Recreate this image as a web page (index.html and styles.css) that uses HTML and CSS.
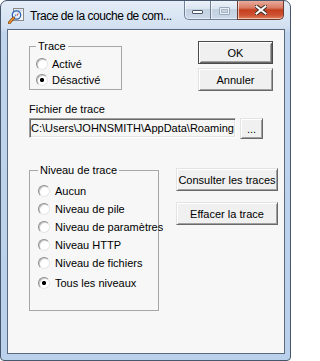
FILE: index.html
```html
<!DOCTYPE html>
<html lang="fr">
<head>
<meta charset="utf-8">
<title>Trace de la couche de communication</title>
<link rel="stylesheet" href="styles.css">
</head>
<body>
<div class="window">
  <div class="titlebar">
    <svg class="app-icon" width="16" height="16" viewBox="0 0 16 16">
      <rect x="5.5" y="0.5" width="10" height="12" fill="#f6f6f6" stroke="#8a8a8a"/>
      <rect x="6.5" y="1.5" width="8" height="2" fill="#c9d6e6"/>
      <circle cx="8.5" cy="7" r="4.2" fill="#e4eefa" stroke="#2f63b4" stroke-width="1.3"/>
      <path d="M8.5 7 L11 4.4 L9.4 7.8 Z" fill="#d42a1e"/>
      <path d="M8.5 7 L6 9.6 L7.6 6.2 Z" fill="#3b6fc0"/>
      <line x1="5.6" y1="10" x2="1.3" y2="14.8" stroke="#7a4a1a" stroke-width="3" stroke-linecap="round"/>
      <line x1="5.6" y1="10" x2="1.3" y2="14.8" stroke="#f0922e" stroke-width="1.6" stroke-linecap="round"/>
    </svg>
    <span class="title">Trace de la couche de com...</span>
    <div class="caption-buttons">
      <div class="cap cap-min"><span class="min-glyph"></span></div>
      <div class="cap cap-max"><span class="max-glyph"></span></div>
      <div class="cap cap-close">
        <svg width="12" height="10" viewBox="0 0 12 10">
          <path d="M1.5 1.5 L10.5 8.5 M10.5 1.5 L1.5 8.5" stroke="#3b2a26" stroke-width="4" stroke-linecap="square"/>
          <path d="M1.5 1.5 L10.5 8.5 M10.5 1.5 L1.5 8.5" stroke="#ffffff" stroke-width="2" stroke-linecap="square"/>
        </svg>
      </div>
    </div>
  </div>
  <div class="client">
    <div class="row row-top">
      <fieldset class="group group-trace">
        <legend>Trace</legend>
        <div class="opt"><span class="radio"></span>Activé</div>
        <div class="opt"><span class="radio checked"></span>Désactivé</div>
      </fieldset>
      <div class="btn-col btn-col-top">
        <div class="btn btn-default">OK</div>
        <div class="btn">Annuler</div>
      </div>
    </div>
    <div class="field-label">Fichier de trace</div>
    <div class="file-row">
      <div class="textbox">C:\Users\JOHNSMITH\AppData\Roaming</div>
      <div class="btn btn-browse">...</div>
    </div>
    <div class="row row-level">
      <fieldset class="group group-level">
        <legend>Niveau de trace</legend>
        <div class="opt opt-level"><span class="radio"></span>Aucun</div>
        <div class="opt opt-level"><span class="radio"></span>Niveau de pile</div>
        <div class="opt opt-level"><span class="radio"></span>Niveau de paramètres</div>
        <div class="opt opt-level"><span class="radio"></span>Niveau HTTP</div>
        <div class="opt opt-level"><span class="radio"></span>Niveau de fichiers</div>
        <div class="opt opt-level opt-last"><span class="radio checked"></span>Tous les niveaux</div>
      </fieldset>
      <div class="btn-col btn-col-level">
        <div class="btn btn-wide">Consulter les traces</div>
        <div class="btn btn-wide">Effacer la trace</div>
      </div>
    </div>
  </div>
</div>
</body>
</html>
```
FILE: styles.css
```css
html, body {
  margin: 0;
  background: #ffffff;
}

body {
  font-family: "Liberation Sans", Arial, sans-serif;
  font-size: 11px;
  color: #000;
}

.window {
  box-sizing: border-box;
  width: 291px;
  height: 361px;
  border: 1px solid #47576b;
  border-radius: 7px 7px 4px 4px;
  background: linear-gradient(180deg, #e4edf8 0, #d2e0f1 26px, #bfd4ec 32px, #bad1eb 100%);
  padding: 0 5px 6px 6px;
  display: flex;
  flex-direction: column;
  overflow: hidden;
}

/* ---------- title bar ---------- */
.titlebar {
  height: 28px;
  flex-shrink: 0;
  display: flex;
  align-items: center;
}

.app-icon {
  margin-left: 1px;
  margin-top: 2px;
  flex-shrink: 0;
}

.title {
  margin-left: 6px;
  font-size: 12px;
  letter-spacing: -0.45px;
  white-space: nowrap;
  margin-top: 2px;
}

.caption-buttons {
  margin-left: auto;
  margin-right: 1px;
  align-self: flex-start;
  margin-top: -1px;
  display: flex;
}

.cap {
  box-sizing: border-box;
  height: 20px;
  border: 1px solid #6f8096;
  border-top: none;
  display: flex;
  align-items: center;
  justify-content: center;
  background: linear-gradient(180deg, #eef3f9 0, #dbe5f0 45%, #c3d1e1 50%, #cad8e8 100%);
  box-shadow: inset 1px 0 rgba(255,255,255,0.6), inset 0 -1px rgba(255,255,255,0.5);
}

.cap-min {
  width: 26px;
  border-right: none;
  border-radius: 0 0 0 5px;
}

.cap-max {
  width: 27px;
  border-right: none;
}

.cap-close {
  width: 47px;
  border-radius: 0 0 5px 0;
  border-color: #6e3a30;
  background: linear-gradient(180deg, #eab3a4 0, #d97a62 42%, #c4401f 52%, #cf5233 80%, #e0855d 100%);
}

.min-glyph {
  display: block;
  box-sizing: border-box;
  width: 11px;
  height: 4px;
  margin-top: 5px;
  background: #ffffff;
  border: 1px solid #4a5566;
  border-radius: 1px;
}

.max-glyph {
  display: block;
  box-sizing: border-box;
  width: 11px;
  height: 8px;
  margin-top: 2px;
  border: 1px solid #9aa8ba;
  box-shadow: inset 0 0 0 1px #e9eff6, inset 0 0 0 2px #a9b6c6;
  border-radius: 1px;
}

/* ---------- client area ---------- */
.client {
  flex: 1;
  border: 1px solid #5a697b;
  background: #f7f7f7;
  padding: 10px 0 0 21px;
  display: flex;
  flex-direction: column;
}

.row {
  display: flex;
  align-items: flex-start;
}

.row-level {
  margin-top: 25px;
}

.group {
  margin: 0;
  min-width: 0;
  box-sizing: border-box;
  border: 1px solid #a7a7a7;
}

.group legend {
  padding: 0 2px;
  line-height: 13px;
  font-size: 11px;
}

.group-trace {
  width: 93px;
  padding: 3px 0 1px 6px;
}

.group-trace legend {
  margin-left: 0;
}

.group-level {
  width: 130px;
  padding: 5px 0 18px 8px;
}

.group-level legend {
  margin-left: 0;
}

.opt {
  display: flex;
  align-items: center;
  height: 16px;
  white-space: nowrap;
}

.opt-level {
  height: 18px;
}

.opt-last {
  margin-top: 2px;
}

.radio {
  box-sizing: border-box;
  width: 12px;
  height: 12px;
  border-radius: 50%;
  margin-right: 4px;
  flex-shrink: 0;
  background: #ffffff;
  border: 1px solid;
  border-color: #8d8d8d #e6e6e6 #e6e6e6 #8d8d8d;
  box-shadow: inset 1px 1px #c8c8c8;
}

.opt-level .radio {
  margin-right: 5px;
}

.radio.checked {
  background: radial-gradient(circle at 50% 50%, #000 0, #000 1.8px, #ffffff 2.4px);
}

/* ---------- buttons ---------- */
.btn-col {
  display: flex;
  flex-direction: column;
  margin-left: auto;
}

.btn-col-top {
  margin-right: 11px;
  margin-top: 1px;
  gap: 4px;
}

.btn-col-level {
  margin-right: 6px;
  margin-top: 4px;
  gap: 11px;
}

.btn {
  box-sizing: border-box;
  width: 75px;
  height: 23px;
  display: flex;
  align-items: center;
  justify-content: center;
  background: #f0f0f0;
  border: 1px solid;
  border-color: #e3e3e3 #696969 #696969 #e3e3e3;
  box-shadow: inset 1px 1px #ffffff, inset -1px -1px #a0a0a0;
  white-space: nowrap;
}

.btn-default {
  border-color: #4a4a4a;
  box-shadow: inset 1px 1px #ffffff, inset -1px -1px #696969, inset 2px 2px #f0f0f0, inset -2px -2px #a0a0a0;
}

.btn-wide {
  width: 102px;
}

.btn-browse {
  width: 23px;
  height: 21px;
  margin-left: 4px;
}

/* ---------- file field ---------- */
.field-label {
  margin-top: 12px;
  line-height: 13px;
}

.file-row {
  display: flex;
  margin-top: 2px;
}

.textbox {
  box-sizing: border-box;
  width: 207px;
  height: 20px;
  padding-left: 1px;
  line-height: 18px;
  white-space: nowrap;
  overflow: hidden;
  background: #f7f7f7;
  border: 1px solid;
  border-color: #a0a0a0 #ffffff #ffffff #a0a0a0;
  box-shadow: inset 1px 1px #696969, inset -1px -1px #e3e3e3;
}
```
